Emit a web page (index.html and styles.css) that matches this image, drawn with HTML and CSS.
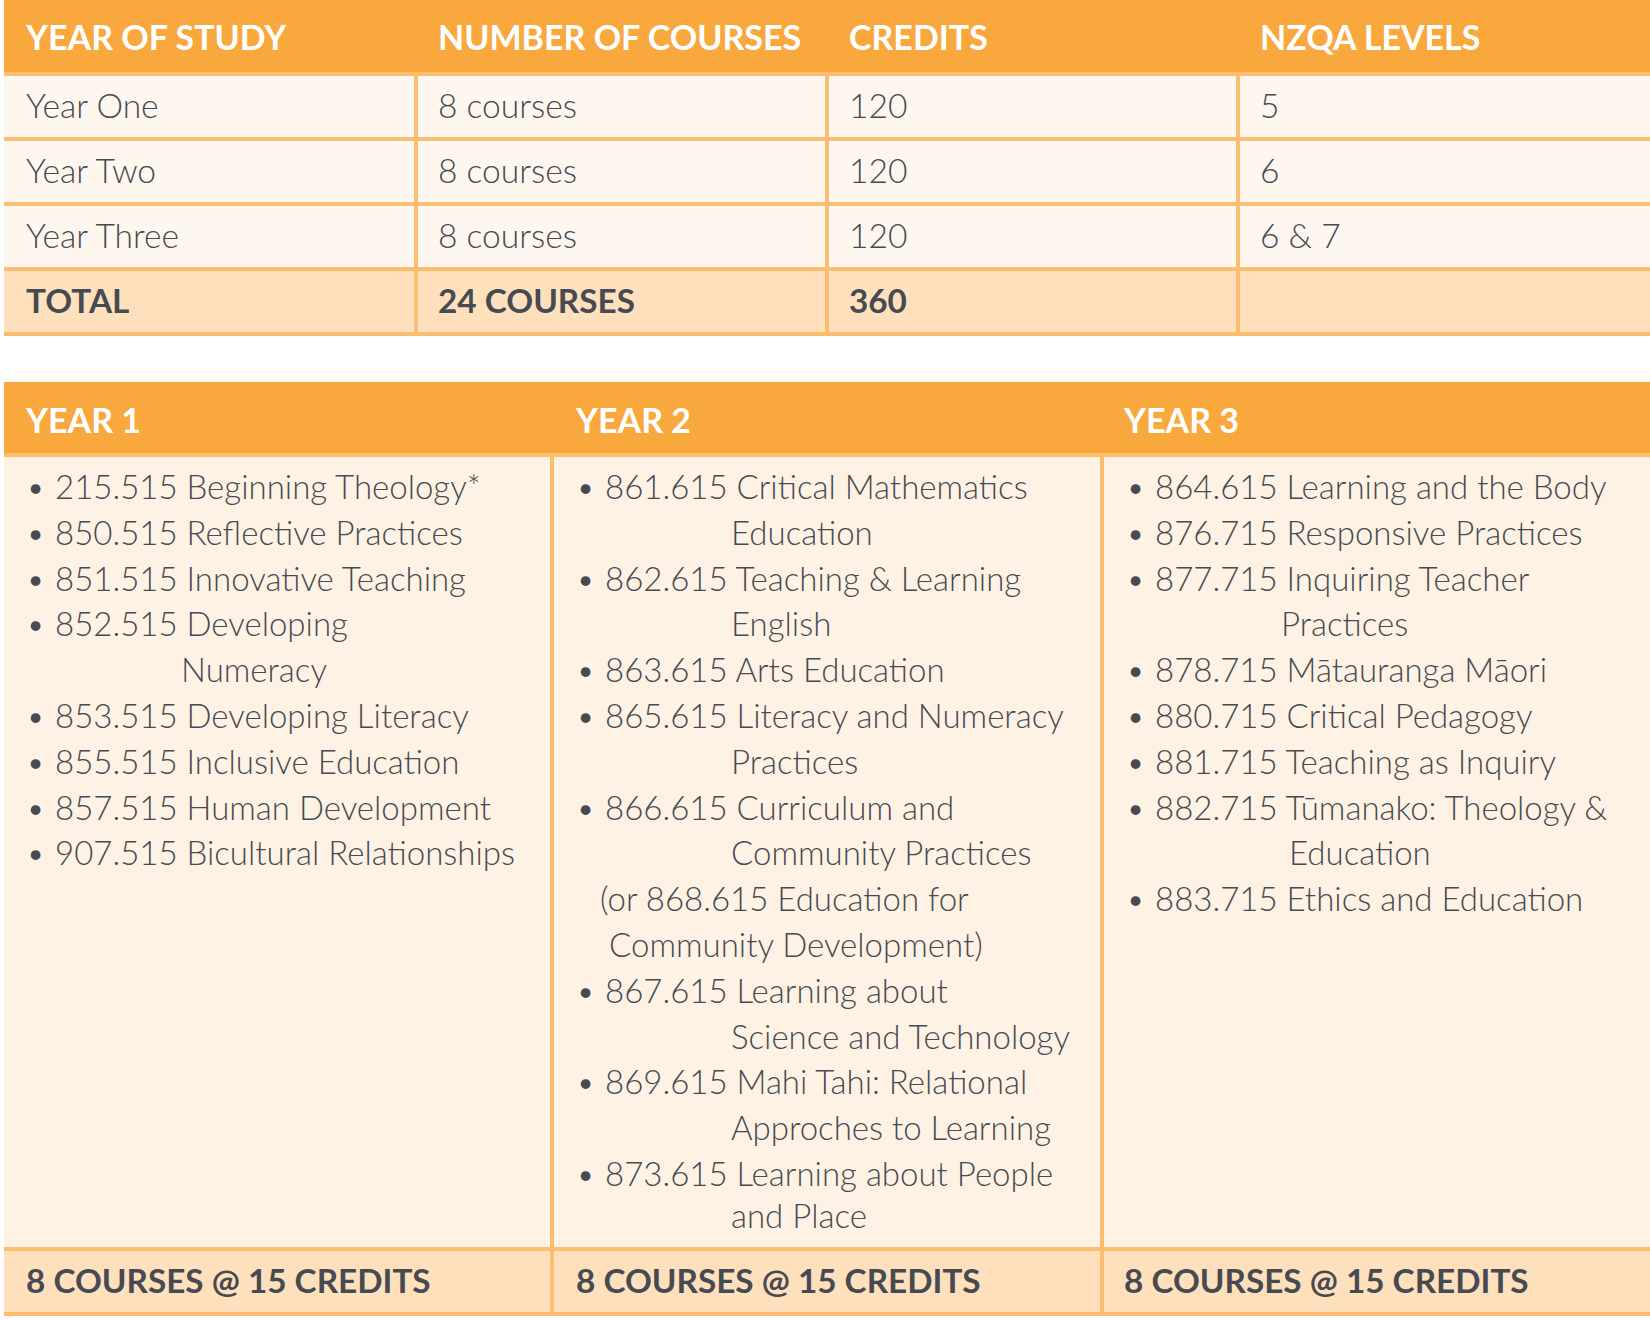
FILE: index.html
```html
<!DOCTYPE html>
<html lang="en">
<head>
<meta charset="utf-8">
<title>Programme structure</title>
<link rel="stylesheet" href="styles.css">
</head>
<body>
<div class="page">
  <section class="summary">
    <div class="sum-head">
      <div class="hcell">YEAR OF STUDY</div>
      <div class="hcell">NUMBER OF COURSES</div>
      <div class="hcell">CREDITS</div>
      <div class="hcell">NZQA LEVELS</div>
    </div>
    <div class="sum-body">
      <div class="cell">Year One</div>
      <div class="cell">8 courses</div>
      <div class="cell">120</div>
      <div class="cell">5</div>
      <div class="cell">Year Two</div>
      <div class="cell">8 courses</div>
      <div class="cell">120</div>
      <div class="cell">6</div>
      <div class="cell">Year Three</div>
      <div class="cell">8 courses</div>
      <div class="cell">120</div>
      <div class="cell">6 &amp; 7</div>
      <div class="cell total">TOTAL</div>
      <div class="cell total">24 COURSES</div>
      <div class="cell total">360</div>
      <div class="cell total"></div>
    </div>
  </section>

  <section class="years">
    <div class="years-head">
      <div class="hcell">YEAR 1</div>
      <div class="hcell">YEAR 2</div>
      <div class="hcell">YEAR 3</div>
    </div>
    <div class="years-body">
      <div class="ycol">
        <ul class="courses">
          <li>215.515 Beginning Theology*</li>
          <li>850.515 Reflective Practices</li>
          <li>851.515 Innovative Teaching</li>
          <li>852.515 Developing<span class="cont">Numeracy</span></li>
          <li>853.515 Developing Literacy</li>
          <li>855.515 Inclusive Education</li>
          <li>857.515 Human Development</li>
          <li>907.515 Bicultural Relationships</li>
        </ul>
      </div>
      <div class="ycol">
        <ul class="courses">
          <li>861.615 Critical Mathematics<span class="cont">Education</span></li>
          <li>862.615 Teaching &amp; Learning<span class="cont">English</span></li>
          <li>863.615 Arts Education</li>
          <li>865.615 Literacy and Numeracy<span class="cont">Practices</span></li>
          <li>866.615 Curriculum and<span class="cont">Community Practices</span></li>
          <li class="plain">(or 868.615 Education for<span class="cont-alt">Community Development)</span></li>
          <li>867.615 Learning about<span class="cont">Science and Technology</span></li>
          <li>869.615 Mahi Tahi: Relational<span class="cont">Approches to Learning</span></li>
          <li>873.615 Learning about People<span class="cont tight">and Place</span></li>
        </ul>
      </div>
      <div class="ycol">
        <ul class="courses">
          <li>864.615 Learning and the Body</li>
          <li>876.715 Responsive Practices</li>
          <li>877.715 Inquiring Teacher<span class="cont">Practices</span></li>
          <li>878.715 Mātauranga Māori</li>
          <li>880.715 Critical Pedagogy</li>
          <li>881.715 Teaching as Inquiry</li>
          <li>882.715 Tūmanako: Theology &amp;<span class="cont wide">Education</span></li>
          <li>883.715 Ethics and Education</li>
        </ul>
      </div>
    </div>
    <div class="years-foot">
      <div class="fcell">8 COURSES @ 15 CREDITS</div>
      <div class="fcell">8 COURSES @ 15 CREDITS</div>
      <div class="fcell">8 COURSES @ 15 CREDITS</div>
    </div>
  </section>
</div>
</body>
</html>
```

FILE: styles.css
```css
html, body {
  margin: 0;
  padding: 0;
  background: #ffffff;
}

.page {
  padding-left: 4px;
  font-family: Lato, "Open Sans", "Liberation Sans", sans-serif;
  color: #474a50;
}

/* ---------- summary table ---------- */
.summary {
  width: 1646px;
}

.sum-head {
  display: grid;
  grid-template-columns: 410px 407px 407px 1fr;
  column-gap: 4px;
  height: 72px;
  background: #f9a83e;
  border-bottom: 4px solid #fbbd6f;
}

.hcell {
  display: flex;
  align-items: center;
  padding-left: 22px;
  color: #ffffff;
  font-size: 34px;
  font-weight: 700;
  white-space: nowrap;
}

.sum-head .hcell:not(:first-child) {
  padding-left: 20px;
}

.sum-body {
  display: grid;
  grid-template-columns: 410px 407px 407px 1fr;
  grid-auto-rows: 61px;
  gap: 4px;
  background: #fbbd6f;
  border-bottom: 4px solid #fbbd6f;
}

.cell {
  display: flex;
  align-items: center;
  padding: 0 0 3px 20px;
  background: #fef7ef;
  font-size: 33.6px;
  font-weight: 300;
  white-space: nowrap;
}

.cell:nth-child(4n+1) {
  padding-left: 22px;
}

.cell.total {
  background: #fee0bd;
  font-size: 33.3px;
  font-weight: 700;
}

/* ---------- years table ---------- */
.years {
  width: 1646px;
  margin-top: 46px;
}

.years-head {
  display: grid;
  grid-template-columns: 546px 546px 1fr;
  column-gap: 4px;
  height: 71px;
  background: #f9a83e;
  border-bottom: 4px solid #fbbd6f;
}

.years-head .hcell {
  padding-top: 3px;
}

.years-head .hcell:last-child {
  padding-left: 20px;
}

.years-body {
  display: grid;
  grid-template-columns: 546px 546px 1fr;
  column-gap: 4px;
  height: 790px;
  background: #fbbd6f;
  border-bottom: 4px solid #fbbd6f;
}

.ycol {
  background: #fef2e4;
  padding: 7px 0 0 22px;
}

.courses {
  list-style: none;
  margin: 0;
  padding: 0;
  font-size: 33px;
  font-weight: 300;
  line-height: 45.8px;
  white-space: nowrap;
}

.courses li::before {
  content: "•";
  display: inline-block;
  width: 19px;
  margin-right: 10px;
  text-align: center;
}

.courses li.plain::before {
  content: none;
}

.courses li.plain {
  padding-left: 24px;
}

.cont {
  display: block;
  padding-left: 155px;
}

.cont.wide {
  padding-left: 163px;
}

.cont.tight {
  line-height: 36px;
}

.cont-alt {
  display: block;
  padding-left: 9px;
}

.years-foot {
  display: grid;
  grid-template-columns: 546px 546px 1fr;
  column-gap: 4px;
  height: 61px;
  background: #fbbd6f;
  border-bottom: 4px solid #fbbd6f;
}

.fcell {
  display: flex;
  align-items: center;
  padding: 0 0 3px 22px;
  background: #fee0bd;
  font-size: 33.3px;
  font-weight: 700;
  white-space: nowrap;
}

.fcell:last-child {
  padding-left: 20px;
}
```
